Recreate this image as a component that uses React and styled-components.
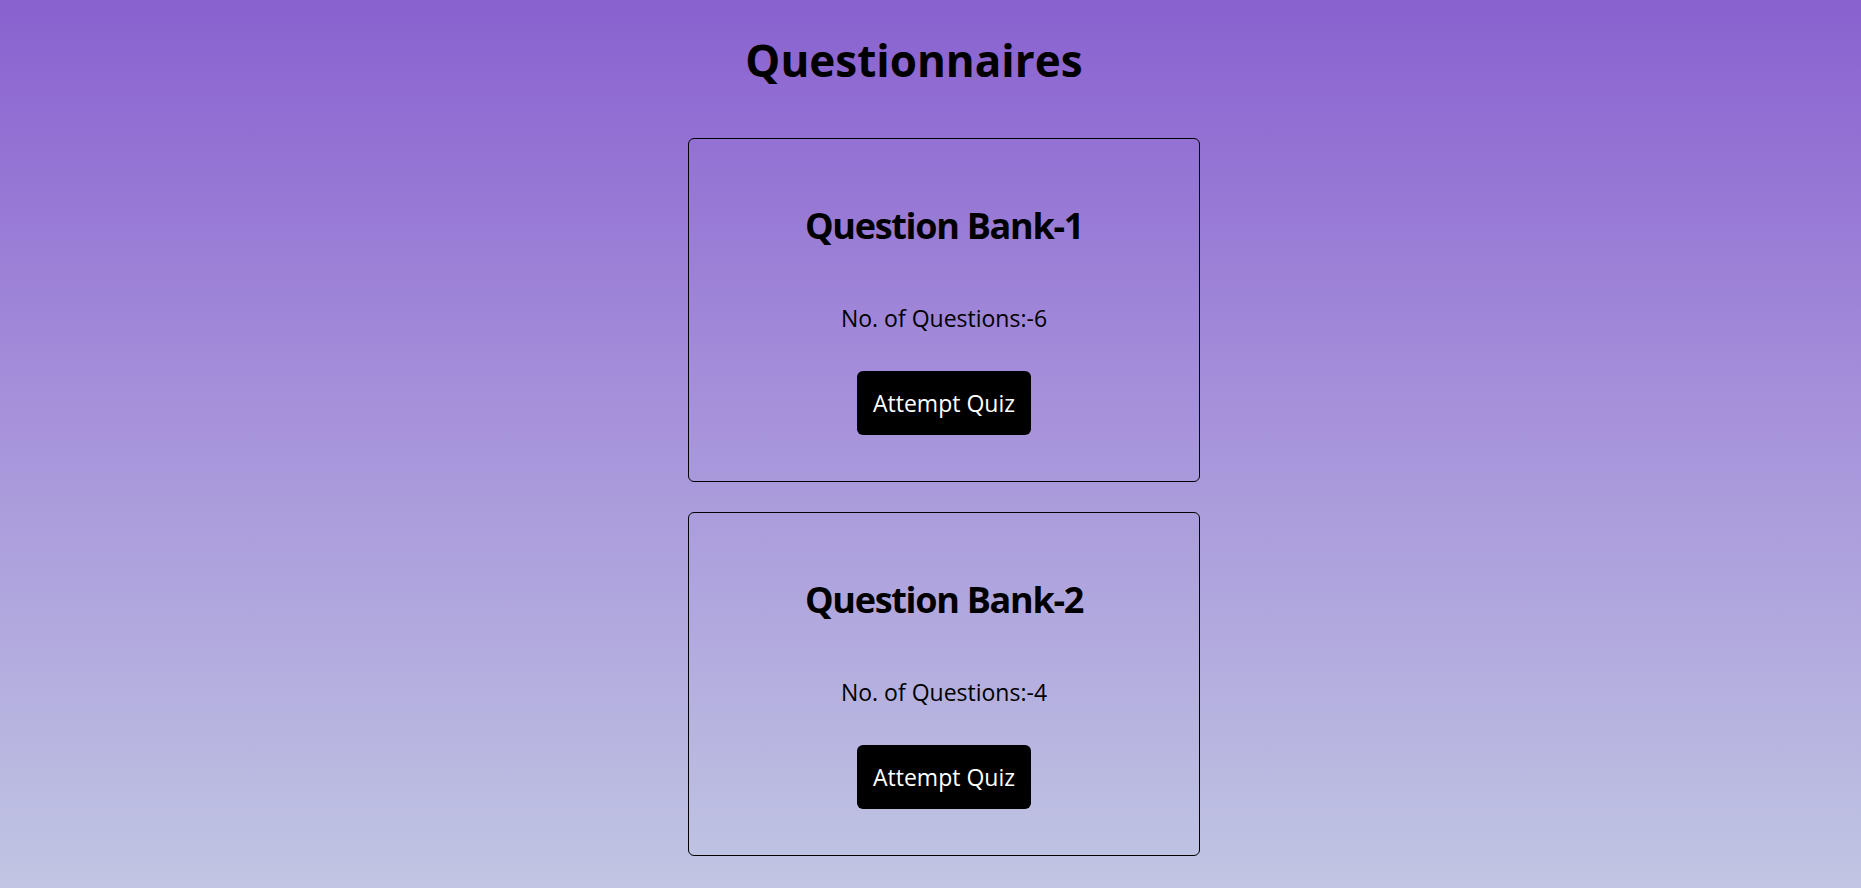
import styled, { createGlobalStyle } from 'styled-components';

const GlobalStyle = createGlobalStyle`
* {
	box-sizing: border-box;
}

body {
	margin: 0;
	font-family: 'Open Sans', 'Noto Sans', sans-serif;
	color: #000;
}
`;

const Page = styled.div`
min-height: 100vh;
background: linear-gradient(180deg, #8961d0 0%, #a590da 45%, #c0c6e3 100%);
display: flex;
flex-direction: column;
align-items: center;
padding-top: 34px;
`;

const Title = styled.h1`
margin: 0 33px 52px 0;
font-size: 44px;
line-height: 52px;
font-weight: 700;
`;

const List = styled.div`
display: flex;
flex-direction: column;
gap: 30px;
margin-left: 27px;
`;

const Card = styled.div`
width: 512px;
height: 344px;
border: 1px solid #000;
border-radius: 6px;
display: flex;
flex-direction: column;
align-items: center;
padding-top: 65px;
`;

const BankName = styled.h2`
margin: 0 0 56px;
font-size: 36px;
line-height: 44px;
font-weight: 700;
letter-spacing: -1.3px;
`;

const Count = styled.p`
margin: 0 0 39px;
font-size: 23px;
line-height: 28px;
`;

const Button = styled.button`
padding: 16px;
font-family: 'Open Sans', 'Noto Sans', sans-serif;
font-size: 23px;
line-height: 32px;
color: #fff;
background-color: #000;
border: none;
border-radius: 6px;
cursor: pointer;
`;

const banks = [
	{ name: 'Question Bank-1', count: 6 },
	{ name: 'Question Bank-2', count: 4 },
];

const App = () => {
	return (
		<>
			<GlobalStyle />
			<Page>
				<Title>Questionnaires</Title>
				<List>
					{banks.map(bank => (
						<Card key={bank.name}>
							<BankName>{bank.name}</BankName>
							<Count>No. of Questions:-{bank.count}</Count>
							<Button>Attempt Quiz</Button>
						</Card>
					))}
				</List>
			</Page>
		</>
	)
}

export default App
